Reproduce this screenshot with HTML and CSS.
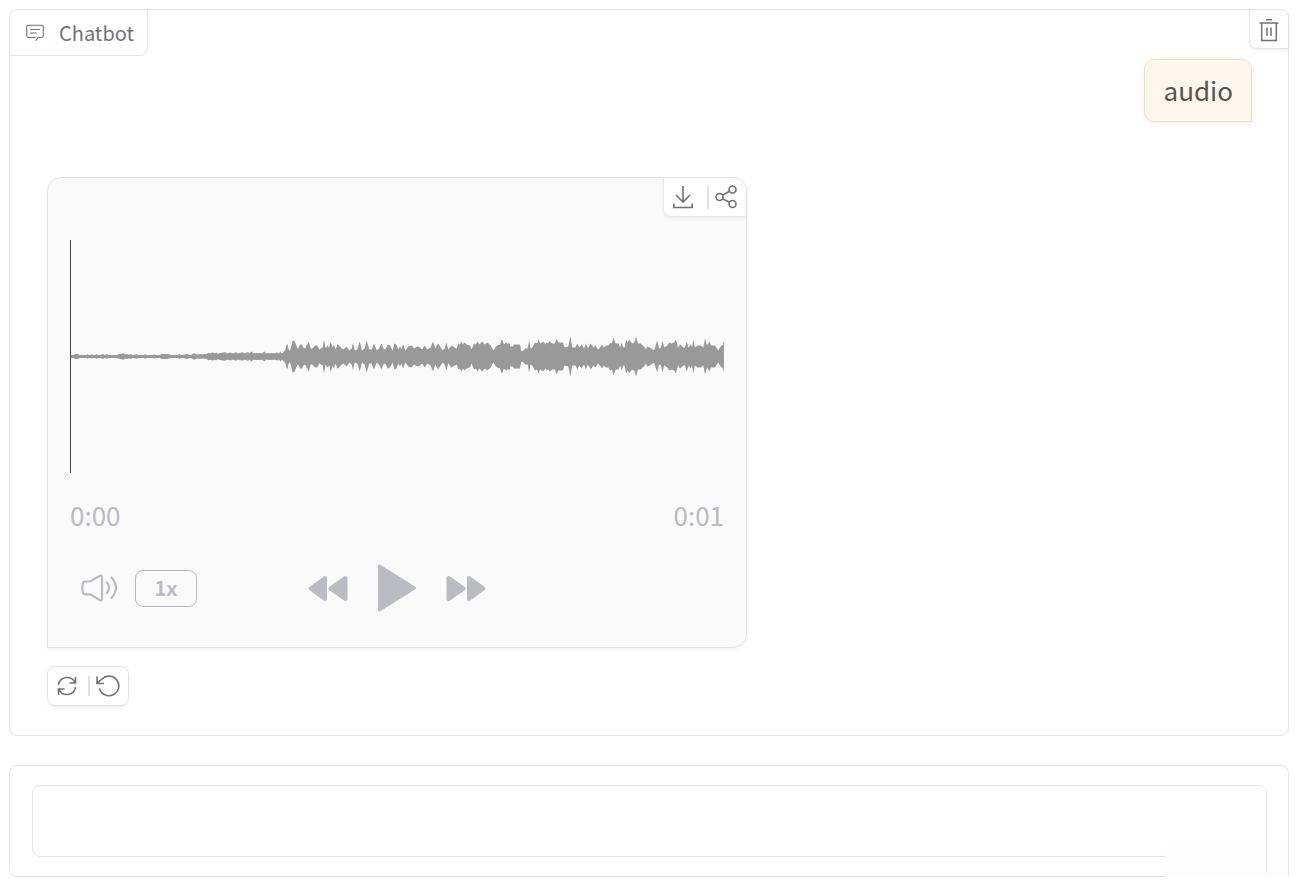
FILE: index.html
```
<!DOCTYPE html>
<html lang="en">
<head>
<meta charset="utf-8">
<title>Chatbot</title>
<link rel="stylesheet" href="styles.css">
</head>
<body>
<main class="page">
  <section class="panel chat" aria-label="Chatbot">
    <header class="chat-head">
      <div class="chat-label">
        <svg class="label-icon" viewBox="0 0 18 17" fill="none" stroke="currentColor" stroke-width="1.1" stroke-linejoin="round" stroke-linecap="round"><path d="M9 13.500H2.500Q.7 13.500 .7 11.700V3Q.7 1.200 2.500 1.200H15.500Q17.300 1.200 17.300 3V11.700Q17.300 13.500 15.500 13.500H12L10 16.400M4.500 5.500H13.500M4.500 9H10.500"/></svg>
        <span>Chatbot</span>
      </div>
      <button class="icon-button clear" type="button" aria-label="Clear">
        <svg class="icon-trash" viewBox="0 0 20 23" fill="none" stroke="currentColor" stroke-width="1.5"><path d="M7 .8H13M.5 4H19.500M2.700 4V21.500H17.300V4M8 8.500V17M12 8.500V17"/></svg>
      </button>
    </header>
    <div class="messages">
      <div class="bubble">audio</div>
      <article class="audio-card">
        <div class="card-tools">
          <button class="icon-button" type="button" aria-label="Download">
            <svg class="icon-download" viewBox="0 0 20 23" fill="none" stroke="currentColor" stroke-width="1.6"><path d="M10 0V16M3 9L10 16L17 9M.8 17.500V21.500H19.200V17.500"/></svg>
          </button>
          <span class="divider"></span>
          <button class="icon-button" type="button" aria-label="Share">
            <svg class="icon-share" viewBox="0 0 22 24" fill="none" stroke="currentColor" stroke-width="1.6"><circle cx="4.500" cy="12" r="3.500"/><circle cx="17.500" cy="4.500" r="3.500"/><circle cx="17.500" cy="19" r="3.500"/><path d="M7.500 10.200L14.500 6.300M7.500 13.800L14.500 17.300"/></svg>
          </button>
        </div>
        <svg class="wave" viewBox="0 -116.5 1962 233" preserveAspectRatio="none" role="img" aria-label="Waveform">
          <g id="half" fill="#999">
            <path transform="translate(-30 0)" d="M30 0V-1.500L42-1.500 44-2.500 54-2.500 58-1.500 80-1.500 83-2.300 86-1.500 93-1.500 95-2.300 98-1.500 106-1.500 110-2.500 114-1.500 123-1.500 128-2.600 134-1.500 141-2.200 145-1.500 170-1.500 180-2.400 190-3.200 196-2 202-2.600 207-1.800 212-2.500 218-1.500 230-2.200 235-1.500 250-1.500 257-2.200 260-1.500 280-1.500 283-2.200 286-1.500 300-1.500 303-2.600 323-2.600 328-2 335-1.500 355-1.500 358-2.500 362-1.500 370-1.800 383-2.400 387-1.500 393-1.500 397-2.600 403-3.200 411-2 418-2.300 440-2.300 444-3.800 452-3.200 458-4 464-3.200 469-4 473-2.800 480-3.500 495-4.300 502-3 512-4 518-3 528-4.200 534-3 548-4.200 554-3 564-4.500 568-3 575-5 580-3.300 592-3.500 607-3.200 613-5 618-3 630-3.600 645-3.200 652-4 657-3 661-5 666-3 672-5 677-7 682-12.500 687-6 692-5 700-15.500 705-14 712-8 720-8V0Z"/>
            <path transform="translate(630 0)" d="M24 0L32-8 38-16 44-15 50-8 55-8 60-12 66-12 70-9 76-8 80-12 83-12 86-15 92-8 97-8 105-11 112-11 118-7 128-9 132-17 137-8 142-11 148-9 152-15 158-9 162-12 167-7 172-12 178-11 182-9 190-7 200-10 208-6 215-8 219-14 224-6 232-7 239-15 246-6 254-8 260-16 268-7 275-7 282-13 290-6 297-8 304-13 312-7 318-8 323-12 330-11 338-6 343-13 349-12 355-7 360-10 364-7 369-12 376-6 385-10 395-11 402-8 412-10 420-9 426-7 434-11 442-7 452-9 459-15 466-8 474-13 480-10 488-6 494-8 499-14 505-7 514-11 525-9 530-8 535-13 540-12 544-15 549-12 553-14 560-12 570-11 575-7 582-13 588-12 592-15 599-12 606-15 615-12 622-14 632-11 640-6 648-10 657-12 662-11 666-17 672-11 678-14 682-12 687-14 690-12V0Z"/>
            <path transform="translate(1290 0)" d="M0 0V-12L5-17 12-12 20-14 28-10 38-10 42-12 60-12 64-5 70-6 76-8 83-8 87-16 92-8 97-9 105-14 111-13 116-17 121-13 130-15 136-12 140-14 144-13 148-15 158-13 165-13 170-18 175-14 188-14 194-9 205-10 211-20 217-9 226-9 232-13 238-9 245-12 252-8 258-13 264-8 272-13 280-9 287-11 294-7 300-9 306-12 312-9 318-11 325-11 331-14 336-13 340-19 347-13 356-13 360-9 365-14 370-9 374-9 378-17 383-14 388-17 396-13 403-14 408-20 414-13 422-13 432-10 438-7 441-10 450-9 462-6 472-16 477-8 483-9 487-16 493-9 502-11 508-14 514-13 522-14 528-17 534-9 541-12 550-9 555-9 560-15 566-9 573-12 576-9 580-17 585-9 594-11 603-11 610-9 615-18 621-11 628-15 633-11 645-11 650-8 655-6 660-9 664-11 668-11 670-16 672-10V0Z"/>
            <path d="M630 0V-3H640L646-6 651-13 655-6 660-6V0Z"/>
          </g>
          <use href="#half" transform="scale(1 -1)"/>
          <path d="M0-1.500H1960V1.500H0Z" fill="#999"/>
          <path d="M0-117H3V117H0Z" fill="#444"/>
        </svg>
        <div class="times"><time>0:00</time><time>0:01</time></div>
        <div class="controls">
          <div class="settings">
            <button class="plain" type="button" aria-label="Volume">
              <svg class="icon-volume" viewBox="0 0 38 28" fill="none" stroke="currentColor" stroke-width="2.2" stroke-linecap="round" stroke-linejoin="round"><path d="M5 7.500H9.500Q10.500 7.500 11.500 6.500L19.500 2Q22 1 22 3.500V24.500Q22 27 19.500 26L11.500 21Q10.500 20.300 9.500 20.300H5Q3 20.300 2.800 18C2 15 2 13 2.800 10Q3 7.500 5 7.500M27 8.500Q31 14 27 19M31.500 3.500Q40.500 13.500 31.500 24"/></svg>
            </button>
            <button class="speed" type="button">1x</button>
          </div>
          <div class="transport">
            <button class="plain" type="button" aria-label="Skip backwards">
              <svg class="icon-skip" viewBox="0 0 40 28" fill="currentColor" stroke="currentColor" stroke-width="4" stroke-linejoin="round"><path d="M2.500 14.500L17 4V25ZM22.500 14.500L37.500 4V25Z"/></svg>
            </button>
            <button class="plain" type="button" aria-label="Play">
              <svg class="icon-play" viewBox="0 0 38 48" fill="currentColor" stroke="currentColor" stroke-width="3" stroke-linejoin="round"><path d="M1.500 2V46L36.500 24Z"/></svg>
            </button>
            <button class="plain" type="button" aria-label="Skip forward">
              <svg class="icon-skip" viewBox="0 0 40 28" fill="currentColor" stroke="currentColor" stroke-width="4" stroke-linejoin="round"><path d="M2.500 4V25L17.500 14.500ZM23 4V25L37.500 14.500Z"/></svg>
            </button>
          </div>
          <span></span>
        </div>
      </article>
      <div class="message-tools">
        <button class="icon-button" type="button" aria-label="Retry">
          <svg class="icon-retry" viewBox="0 0 20 20" fill="none" stroke="currentColor" stroke-width="1.600"><path d="M1.500 9A8.700 8.700 0 0 1 18 6.500M18.500 1V7H12.500M18.500 11A8.700 8.700 0 0 1 2 13.500M1.500 19V13H7.500"/></svg>
        </button>
        <span class="divider"></span>
        <button class="icon-button" type="button" aria-label="Undo">
          <svg class="icon-undo" viewBox="0 0 24 22" fill="none" stroke="currentColor" stroke-width="1.600"><path d="M1 1.500V8.500H8M1.300 8.200L6 4A9.800 9.800 0 1 1 3.500 13.500"/></svg>
        </button>
      </div>
    </div>
  </section>
  <section class="panel composer">
    <textarea class="input" aria-label="Message"></textarea>
    <div class="corner-fade"></div>
  </section>
</main>
</body>
</html>
```
FILE: styles.css
```
* { box-sizing: border-box; }

body {
  margin: 0;
  background: #fff;
  color: #52525b;
  font-family: "Noto Sans CJK SC", "Noto Sans", sans-serif;
}

button {
  font: inherit;
  color: inherit;
  border: 0;
  padding: 0;
  background: none;
}

svg { display: block; }

.page {
  display: flex;
  flex-direction: column;
  gap: 29px;
  padding: 9px 8px 8px 9px;
}

.panel {
  border: 1px solid #e4e4e7;
  border-radius: 8px;
  background: #fff;
}

.chat-head {
  display: flex;
  justify-content: space-between;
  align-items: flex-start;
}

.chat-label {
  display: flex;
  align-items: center;
  gap: 15px;
  height: 46px;
  padding: 0 13px 0 16px;
  border-right: 1px solid #e4e4e7;
  border-bottom: 1px solid #e4e4e7;
  border-radius: 8px 0 8px 0;
  color: #71717a;
  font-size: 20px;
  line-height: 28px;
}

.label-icon { width: 18px; height: 17px; }

.icon-button {
  display: flex;
  align-items: center;
  justify-content: center;
  color: #71717a;
}

.clear {
  width: 39px;
  height: 39px;
  padding-top: 2px;
  border-left: 1px solid #e4e4e7;
  border-bottom: 1px solid #e4e4e7;
  border-radius: 0 8px 0 8px;
  box-shadow: 0 2px 4px rgba(0, 0, 0, 0.05);
}

.icon-trash { width: 20px; height: 23px; }

.messages {
  display: flex;
  flex-direction: column;
  padding: 3px 36px 29px 37px;
}

.bubble {
  align-self: flex-end;
  padding: 10px 18px 12px 19px;
  border: 1px solid #f8dfb9;
  border-radius: 10px 10px 0 10px;
  background: #fff6ed;
  box-shadow: 0 2px 4px rgba(0, 0, 0, 0.05);
  color: #57534e;
  font-size: 26px;
  line-height: 39px;
}

.audio-card {
  width: 700px;
  max-width: 100%;
  margin-top: 55px;
  padding-bottom: 35px;
  border: 1px solid #e4e4e7;
  border-radius: 14px 14px 14px 0;
  background: #fafafa;
  box-shadow: 0 2px 4px rgba(0, 0, 0, 0.05);
  color: #bbbbc2;
}

.card-tools {
  display: flex;
  align-items: center;
  justify-content: space-between;
  width: 83px;
  height: 39px;
  margin-left: auto;
  padding: 0 9px;
  border-left: 1px solid #e9e9eb;
  border-bottom: 1px solid #e9e9eb;
  border-radius: 0 14px 0 8px;
  background: #fff;
  box-shadow: 0 2px 4px rgba(0, 0, 0, 0.05);
}

.divider { width: 2px; height: 24px; background: #e4e4e7; }
.card-tools .divider { margin-left: 8px; }
.icon-download { width: 20px; height: 23px; }
.icon-share { width: 22px; height: 24px; }

.wave {
  width: calc(100% - 44px);
  height: 233px;
  margin: 23px 22px 0;
}

.times {
  display: flex;
  justify-content: space-between;
  margin-top: 22px;
  padding: 0 22px;
  font-size: 26px;
  line-height: 40px;
}

.controls {
  display: grid;
  grid-template-columns: 1fr auto 1fr;
  align-items: center;
  margin-top: 29px;
  padding: 0 32px;
}

.settings { display: flex; align-items: center; gap: 17px; }
.icon-volume { width: 38px; height: 28px; }

.speed {
  width: 62px;
  height: 37px;
  border: 1px solid #bbbbc2;
  border-radius: 8px;
  font-size: 20px;
  font-weight: 700;
  line-height: 28px;
}

.transport { display: flex; align-items: center; gap: 30px; }
.icon-skip { width: 40px; height: 28px; }
.icon-play { width: 38px; height: 48px; }

.message-tools {
  display: flex;
  align-items: center;
  justify-content: space-between;
  align-self: flex-start;
  width: 82px;
  height: 40px;
  margin-top: 18px;
  padding: 0 8px 0 9px;
  border: 1px solid #e4e4e7;
  border-radius: 8px;
  box-shadow: 0 2px 4px rgba(0, 0, 0, 0.05);
}

.message-tools .divider { height: 20px; margin-left: 5px; }
.icon-retry { width: 20px; height: 20px; }
.icon-undo { width: 24px; height: 22px; }

.composer {
  position: relative;
  padding: 19px 21px 19px 22px;
}

.input {
  display: block;
  width: 100%;
  height: 72px;
  padding: 16px;
  border: 1px solid #e4e4e7;
  border-radius: 8px;
  background: #fff;
  font: inherit;
  resize: none;
}

/* Fades the lower right corner of the composer */
.corner-fade {
  position: absolute;
  right: -1px;
  bottom: -1px;
  width: 124px;
  height: 32px;
  border-right: 1px solid #e4e4e7;
  background: #fefefe;
  pointer-events: none;
}

.corner-fade::before {
  content: "";
  position: absolute;
  right: 21px;
  top: 0;
  width: 1px;
  height: 28px;
  background: #e4e4e7;
}
```
